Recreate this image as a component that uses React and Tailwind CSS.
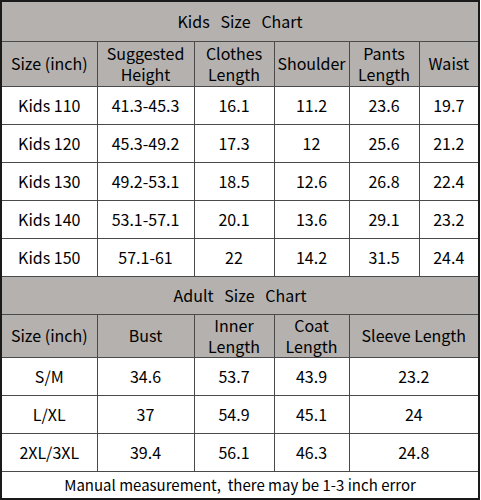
import React from 'react';

const kids = [
  ['Kids 110', '41.3-45.3', '16.1', '11.2', '23.6', '19.7'],
  ['Kids 120', '45.3-49.2', '17.3', '12', '25.6', '21.2'],
  ['Kids 130', '49.2-53.1', '18.5', '12.6', '26.8', '22.4'],
  ['Kids 140', '53.1-57.1', '20.1', '13.6', '29.1', '23.2'],
  ['Kids 150', '57.1-61', '22', '14.2', '31.5', '24.4'],
];

const adults = [
  ['S/M', '34.6', '53.7', '43.9', '23.2'],
  ['L/XL', '37', '54.9', '45.1', '24'],
  ['2XL/3XL', '39.4', '56.1', '46.3', '24.8'],
];

const cell = 'border border-[#4a4a4a] text-center align-middle p-0';

const App = () => {
  return (
    <div className="w-[481px] h-[500px] bg-white">
      <div
        className="w-[480px] h-[500px] border-2 border-[#1a1a1a] text-black text-[16px] leading-[21px]"
        style={{ fontFamily: '"Noto Sans CJK SC", "Noto Sans", sans-serif' }}
      >
        <table className="w-full border-collapse border-hidden table-fixed">
          <colgroup>
            <col className="w-[95px]" />
            <col className="w-[97px]" />
            <col className="w-[80px]" />
            <col className="w-[75px]" />
            <col className="w-[70px]" />
            <col className="w-[59px]" />
          </colgroup>
          <tbody>
            {/* Kids title */}
            <tr className="h-[39px] bg-[#b4b1af]">
              <td colSpan={6} className={`${cell} whitespace-pre`}>Kids   Size   Chart</td>
            </tr>
            <tr className="h-[45px] bg-[#b4b1af]">
              <td className={cell}>Size (inch)</td>
              <td className={cell}>Suggested<br />Height</td>
              <td className={cell}>Clothes<br />Length</td>
              <td className={cell}>Shoulder</td>
              <td className={cell}>Pants<br />Length</td>
              <td className={cell}>Waist</td>
            </tr>
            {kids.map((row) => (
              <tr key={row[0]} className="h-[38px]">
                {row.map((v, i) => (
                  <td key={i} className={cell}>{v}</td>
                ))}
              </tr>
            ))}

            {/* Adult title */}
            <tr className="h-[38px] bg-[#b4b1af]">
              <td colSpan={6} className={`${cell} whitespace-pre`}>Adult   Size   Chart</td>
            </tr>
            <tr className="h-[43px] bg-[#b4b1af]">
              <td className={cell}>Size (inch)</td>
              <td className={cell}>Bust</td>
              <td className={cell}>Inner<br />Length</td>
              <td className={cell}>Coat<br />Length</td>
              <td colSpan={2} className={cell}>Sleeve Length</td>
            </tr>
            {adults.map((row) => (
              <tr key={row[0]} className="h-[38px]">
                {row.map((v, i) => (
                  <td key={i} colSpan={i === 4 ? 2 : 1} className={cell}>{v}</td>
                ))}
              </tr>
            ))}

            {/* Note */}
            <tr className="h-[27px]">
              <td colSpan={6} className={`${cell} text-[15px] whitespace-pre`}>
                Manual measurement,  there may be 1-3 inch error
              </td>
            </tr>
          </tbody>
        </table>
      </div>
    </div>
  );
};

export default App;
